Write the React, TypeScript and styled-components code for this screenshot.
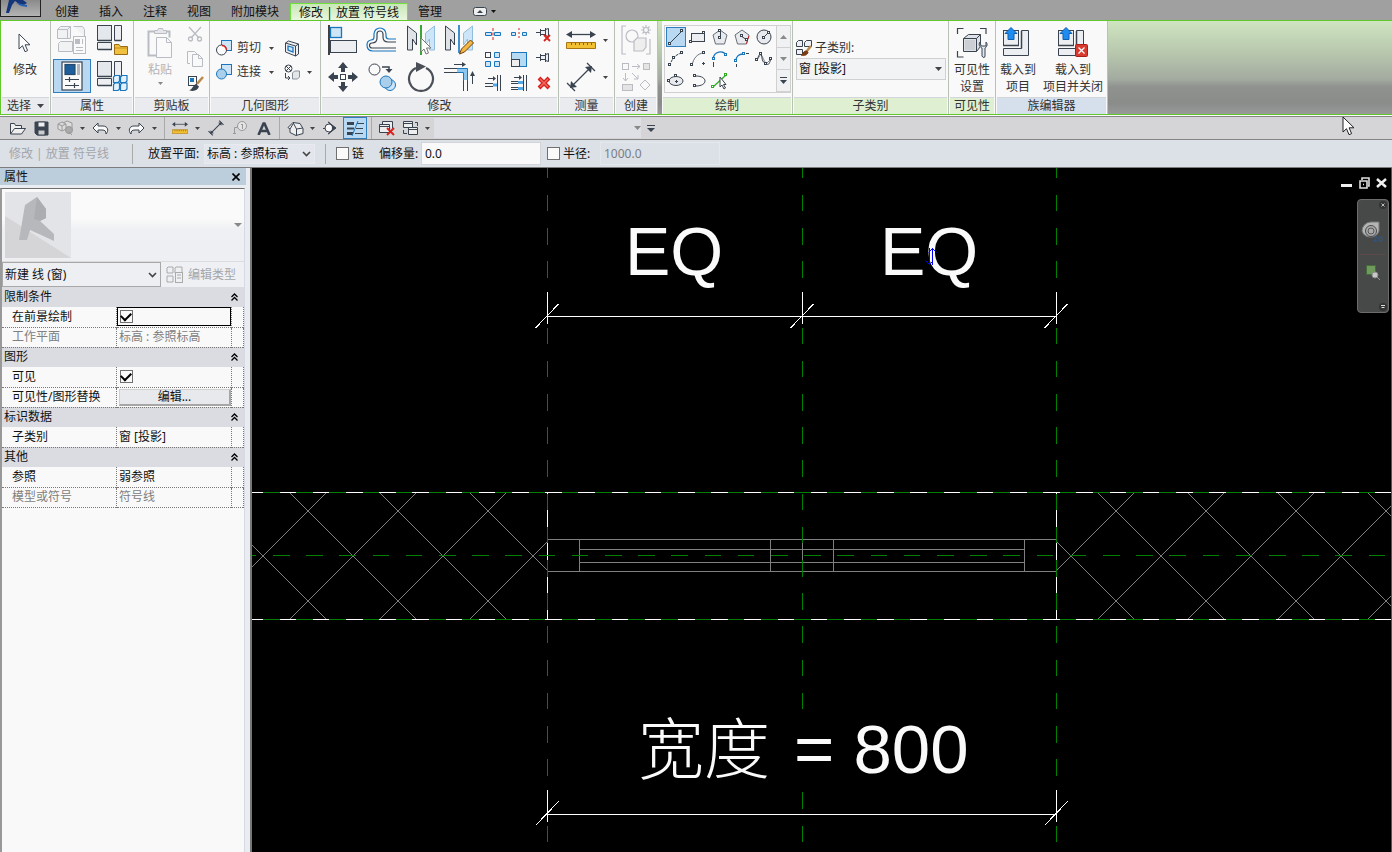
import React from 'react';
import styled, { createGlobalStyle, css } from 'styled-components';

const INK = '#3a4450';
const BLUE = '#1a76bd';
const SKY = '#cde5f6';
const MUTE = '#b9bdc3';
const RED = '#d8201c';

const GlobalStyle = createGlobalStyle`
  * { box-sizing: border-box; }
  body { margin: 0; background: #000; }
  body, button, input, select {
    font-family: "Noto Sans", "Noto Sans CJK SC", sans-serif;
    font-size: 12px;
    line-height: 16px;
    color: #333;
  }
  button, input, select { margin: 0; padding: 0; border: 0; border-radius: 0; background: none; }
  svg { display: block; flex: none; }
`;

/* ---------- shell ---------- */
const Shell = styled.div`
  position: relative;
  display: flex;
  flex-direction: column;
  min-height: 100vh;
  overflow: hidden;
`;
const TabBar = styled.nav`
  display: flex;
  align-items: stretch;
  height: 20px;
  background: #a0a0a0;
`;
const AppButton = styled.button`
  width: 41px;
  height: 17px;
  margin-right: 4px;
  overflow: hidden;
  border: 1px solid #222;
  border-top: 0;
  background: linear-gradient(#8a8a8a, #b4b4b4);
`;
const Tab = styled.button<{ $active?: boolean }>`
  padding: 0 10px;
  margin-top: 3px;
  height: 17px;
  white-space: nowrap;
  color: #111;
  ${p => p.$active && css`
    padding: 0 8px;
    margin-left: 1px;
    height: 18px;
    border: 1px solid #6fe03c;
    border-bottom: 0;
    background: linear-gradient(#c9e8b6, #eaf7e1);
  `}
`;
const TabToggle = styled.button`
  display: flex;
  align-items: center;
  gap: 4px;
  margin: 2px 0 0 21px;
`;

/* ---------- ribbon ---------- */
const Ribbon = styled.div`
  display: flex;
  height: 95px;
  border: 1px solid #62c92c;
  border-right: 0;
  background: linear-gradient(#cfe4c1 0, #b9c9ae 30px, #a3aba0 58px, #8f928f 66px, #8a8c8a 82px, #979a98 100%);
`;
const Panel = styled.section<{ $w: number; $gapAfter?: boolean }>`
  display: flex;
  flex-direction: column;
  width: ${p => p.$w}px;
  flex: none;
  margin-right: ${p => (p.$gapAfter ? 4 : 0)}px;
  border-right: 1px solid #b9c0b6;
  background: #f9f9f9;
`;
const PanelBody = styled.div<{ $pad?: string; $gap?: number }>`
  display: flex;
  flex: 1;
  padding: ${p => p.$pad || '0'};
  gap: ${p => p.$gap || 0}px;
`;
const titleTones = { plain: '#e9ebee', green: '#dff0d2', blue: '#d6e0ec' };
const PanelTitle = styled.h2<{ $tone: keyof typeof titleTones }>`
  display: flex;
  align-items: center;
  justify-content: center;
  gap: 6px;
  height: 17px;
  margin: 0 1px;
  border-top: 1px solid #d3d6da;
  background: ${p => titleTones[p.$tone]};
  font-size: 12px;
  font-weight: 400;
  line-height: 16px;
`;
const Column = styled.div`
  display: flex;
  flex-direction: column;
`;
const Row = styled.div`
  display: flex;
  align-items: center;
`;
const FieldLabel = styled.label`
  display: flex;
  align-items: center;
  gap: 3px;
  height: 21px;
`;
const IconButton = styled.button<{ $w: number; $h: number; $active?: boolean }>`
  display: flex;
  align-items: center;
  justify-content: center;
  flex: none;
  width: ${p => p.$w}px;
  height: ${p => p.$h}px;
  ${p => p.$active && css`
    border: 1px solid #2f7fc0;
    background: #b9d9f2;
  `}
`;
const StackButton = styled.button<{ $w: number; $muted?: boolean }>`
  display: flex;
  flex-direction: column;
  align-items: center;
  width: ${p => p.$w}px;
  padding-top: 4px;
  line-height: 17px;
  white-space: nowrap;
  color: ${p => (p.$muted ? '#b4b4b4' : '#333')};
`;
const IconSlot = styled.span`
  display: flex;
  align-items: center;
  justify-content: center;
  height: 36px;
`;
const CaretSlot = styled.span`
  display: flex;
  align-items: center;
  height: 10px;
`;
const TextButton = styled.button`
  display: flex;
  align-items: center;
  gap: 5px;
  width: 46px;
  height: 24px;
`;
const IconGrid = styled.div<{ $cols: string; $rows: string }>`
  display: grid;
  grid-template-columns: ${p => p.$cols};
  grid-template-rows: ${p => p.$rows};
  place-items: center;
`;
const Gallery = styled.div`
  display: flex;
  width: 127px;
  height: 68px;
  border: 1px solid #d0d0d0;
`;
const GalleryGrid = styled.div`
  display: grid;
  grid-template-columns: repeat(5, 22px);
  grid-template-rows: repeat(3, 22px);
  place-items: center;
  flex: 1;
`;
const GalleryScroll = styled.div`
  display: flex;
  flex-direction: column;
  width: 14px;
  border-left: 1px solid #d0d0d0;
`;
const GalleryStep = styled.button`
  display: flex;
  flex: 1;
  align-items: center;
  justify-content: center;
  border-bottom: 1px solid #d0d0d0;
  background: #f0f1f3;
`;

/* ---------- selects ---------- */
const SelectBox = styled.span<{ $w: number; $h: number; $border: string; $bg: string }>`
  display: grid;
  grid-template: 1fr / 1fr;
  align-items: center;
  flex: none;
  width: ${p => p.$w}px;
  height: ${p => p.$h}px;
  border: 1px solid ${p => p.$border};
  background: ${p => p.$bg};
  svg {
    grid-area: 1 / 1;
    justify-self: end;
    margin-right: 3px;
    pointer-events: none;
  }
`;
const SelectField = styled.select`
  grid-area: 1 / 1;
  width: 100%;
  height: 100%;
  padding: 0 16px 0 2px;
  appearance: none;
  color: #111;
`;

/* ---------- quick access bar ---------- */
const QuickBar = styled.div`
  display: flex;
  align-items: center;
  height: 25px;
  padding: 2px 0 1px 5px;
  border-top: 1px solid #fafafa;
  border-bottom: 1px solid #858585;
  background: linear-gradient(#858585 1px, #d5d4d6 1px);
`;
const BarRule = styled.i<{ $w: number; $h: number }>`
  width: ${p => p.$w}px;
  height: ${p => p.$h}px;
  flex: none;
  background: linear-gradient(#aaa, #aaa) center / 1px 100% no-repeat;
`;
const SearchField = styled.div`
  display: flex;
  align-items: center;
  justify-content: flex-end;
  width: 207px;
  height: 20px;
  margin-left: 4px;
  background: #dfe0e6;
`;

/* ---------- options bar ---------- */
const OptionsBar = styled.div`
  display: flex;
  align-items: center;
  height: 28px;
  padding-left: 9px;
  border-bottom: 1px solid #7d7d7d;
  background: #dce0e7;
  color: #111;
  white-space: nowrap;
`;
const ModeName = styled.span`
  width: 118px;
  color: #a3a6aa;
`;
const OptionLabel = styled.label<{ $w: number; $indent?: number }>`
  flex: none;
  width: ${p => p.$w}px;
  padding-left: ${p => p.$indent || 0}px;
`;
const OptionCheck = styled.label<{ $w: number; $indent?: number }>`
  display: flex;
  align-items: center;
  gap: 3px;
  flex: none;
  width: ${p => p.$w}px;
  padding-left: ${p => p.$indent || 0}px;
`;
const CheckBox = styled.input.attrs({ type: 'checkbox' })`
  display: grid;
  place-items: center;
  flex: none;
  width: 13px;
  height: 13px;
  appearance: none;
  border: 1px solid #707070;
  background: #fafafa;
  &:checked::before {
    content: '';
    width: 8px;
    height: 5px;
    margin-bottom: 2px;
    border: solid #000;
    border-width: 0 0 2px 2px;
    transform: rotate(-45deg);
  }
`;
const NumberBox = styled.input`
  width: 120px;
  height: 23px;
  padding: 0 3px;
  border: 1px solid #d2d4da;
  background: #f9f9f9;
  color: #111;
  &:disabled {
    border-color: #e4e7ec;
    background: #dce0e7;
    color: #7a7e84;
  }
`;

/* ---------- workspace ---------- */
const Workspace = styled.main`
  display: flex;
  flex: 1;
`;
const Properties = styled.aside`
  display: flex;
  flex-direction: column;
  flex: none;
  width: 252px;
  padding-right: 4px;
  border-right: 2px solid #777;
  background: #e9edf2;
`;
const PropertiesHead = styled.header`
  display: flex;
  align-items: center;
  justify-content: space-between;
  height: 17px;
  padding: 0 6px 0 4px;
  background: #bccddb;
  color: #111;
`;
const PropertiesBox = styled.div`
  flex: 1;
  margin: 3px 1px 0 0;
  border-top: 1px solid #6e6e6e;
  border-left: 2px solid #999;
  border-right: 1px solid #d5dae2;
  background: #f9f9f9;
`;
const TypePicker = styled.button`
  display: flex;
  align-items: center;
  justify-content: space-between;
  width: 100%;
  height: 73px;
  padding: 0 2px 0 3px;
  border-bottom: 1px solid #dcdcdc;
  background: linear-gradient(#fafafa 30px, #eff0f3 40px, #eeeff2);
`;
const TypeRow = styled.div`
  display: flex;
  align-items: center;
  gap: 5px;
  height: 25px;
  background: #eff0f3;
`;
const EditType = styled.button`
  display: flex;
  align-items: center;
  gap: 5px;
  color: #a4a6aa;
`;
const Grid = styled.table`
  width: 100%;
  table-layout: fixed;
  border-collapse: collapse;
  color: #111;
  th, td {
    height: 20px;
    padding: 0;
    text-align: left;
    font-weight: 400;
    line-height: 16px;
    white-space: nowrap;
  }
`;
const GroupCell = styled.th`
  background: #dadce1;
`;
const GroupButton = styled.button`
  display: flex;
  align-items: center;
  justify-content: space-between;
  width: 100%;
  height: 18px;
  padding: 0 6px 0 2px;
  color: #111;
`;
const PropRow = styled.tr<{ $muted?: boolean }>`
  border-bottom: 1px dotted #777;
  color: ${p => (p.$muted ? '#808080' : '#111')};
  & > th { padding-left: 10px; }
  & > td { border-left: 1px dotted #777; padding-left: 2px; }
  & > td:last-child { border-right: 1px dotted #777; }
`;
const ValueFrame = styled.span<{ $focus?: boolean }>`
  display: flex;
  align-items: center;
  height: 19px;
  padding-left: 2px;
  margin-left: -2px;
  border: 1px solid ${p => (p.$focus ? '#000' : 'transparent')};
`;
const EditButton = styled.button`
  display: block;
  width: 100%;
  height: 17px;
  border: 1px solid #d0d0d0;
  border-right: 2px solid #a6a6a6;
  border-bottom: 2px solid #a6a6a6;
  background: #e8e9ec;
  line-height: 14px;
  color: #111;
`;

const Viewport = styled.div`
  position: relative;
  flex: 1;
  min-width: 0;
  overflow: hidden;
  border-right: 1px solid #555;
  background: #000;
`;
const Drawing = styled.svg`
  position: absolute;
  inset: 0;
  width: 100%;
  height: 100%;
`;
const WindowControls = styled.div`
  position: absolute;
  top: 9px;
  right: 4px;
  display: flex;
  gap: 6px;
`;
const NavBar = styled.div`
  position: absolute;
  top: 31px;
  right: 2px;
  display: flex;
  flex-direction: column;
  align-items: center;
  justify-content: space-between;
  width: 32px;
  height: 114px;
  padding: 1px 0;
  border: 1px solid #6c6c6c;
  border-radius: 4px;
  background: #474949;
`;
const NavTools = styled.div`
  display: flex;
  flex-direction: column;
  align-items: center;
  gap: 8px;
  margin-bottom: 10px;
`;
const NavMini = styled.button`
  align-self: flex-end;
  margin-right: 1px;
`;
const Pointer = styled.svg`
  position: absolute;
  top: 116px;
  right: 36px;
  pointer-events: none;
`;

/* ---------- icons ---------- */
type IconProps = { w: number; h: number; s?: string; sw?: number; children: React.ReactNode };
const Icon = ({ w, h, s = INK, sw = 1, children }: IconProps) => (
  <svg width={w} height={h} viewBox={`0 0 ${w} ${h}`} fill="none" stroke={s} strokeWidth={sw} aria-hidden="true">
    {children}
  </svg>
);
const Caret = ({ c = '#444', w = 5 }: { c?: string; w?: number }) => (
  <svg width={w} height={w > 6 ? 4 : 3} viewBox="0 0 6 3" preserveAspectRatio="none" aria-hidden="true"><path d="M0 0h6L3 3z" fill={c} /></svg>
);
const UpCaret = () => <svg width="7" height="4" viewBox="0 0 7 4" aria-hidden="true"><path d="M0 4h7L3.500 0z" fill="#8a8a8a" /></svg>;
const ARROW = 'M1 1v15l3.500-3.300 2.500 6 2.600-1.100-2.500-5.800H12z';

const Chevron = () => <Icon w={9} h={6} s="#444" sw={1.6}><path d="M1 1l3.500 3.500L8 1" /></Icon>;
const CursorIcon = () => <Icon w={14} h={21}><path d={ARROW} fill="#fff" /></Icon>;

const TypeProps = ({ s = MUTE }) => (
  <Icon w={30} h={30} s={s}>
    <path d="M3.500 1.500h10v12h-13v-9zM3.500 16.500h12v10h-14v-8zM16.500 1.500h9l2 3v7M.5 4.500h10v9M10.500 4.500l3-3" fill="#f1f2f4" />
    <rect x="16.500" y="11.500" width="12" height="17" fill="#fafafa" />
    <rect x="18.500" y="14.500" width="4" height="4" fill={s} />
    <path d="M19 22.500h7M19 25.500h7M25.500 14v5" />
  </Icon>
);
const Blocks = ({ children }: { children: React.ReactNode }) => (
  <Icon w={31} h={31} sw={1}>
    <rect x=".5" y=".5" width="14" height="15" fill="#e4e7ec" />
    <path d="M17.500 15.500V.5h7v15M.5 17.500h14v7H.5z" fill="#eceef1" />
    <path d="M1 15.500h14M1 24.500h14M17.500 15.500h7" strokeWidth="1.500" />
    {children}
  </Icon>
);
const FamilyCategory = () => (
  <Blocks><path d="M17.500 29.500V19.500h4.500l1.500 2h7v8z" fill="#f0c040" stroke="#9a6a14" /><path d="M18 23h12" stroke="#c89018" /></Blocks>
);
const FamilyTypes = () => (
  <Blocks>
    <g fill="#e2f1fb" stroke={BLUE} strokeWidth="1.200">
      <path d="M16.500 16l1.500-1.500h4.500v5.500l-1.500 1.500h-4.500zM23.500 16l1.500-1.500h5v5.500l-1.500 1.500h-5zM16.500 23.500l1.500-1.500h4.500v6l-1.500 1.500h-4.500zM23.500 23.500l1.500-1.500h5v6l-1.500 1.500h-5z" />
    </g>
  </Blocks>
);
const PropertiesIcon = () => (
  <Icon w={22} h={30} sw={1.2}>
    <rect x="1" y="1" width="20" height="28" fill="#fafafa" />
    <rect x="4" y="3.500" width="10" height="10" fill="#1d5f9c" stroke="#274a6b" />
    <path d="M17.500 3v11" stroke="#b0b6be" strokeWidth="3" />
    <path d="M4 18.500h14M8.500 16v5M4 24.500h14M13.500 22v5" />
  </Icon>
);
const Paste = () => (
  <Icon w={26} h={32} s={MUTE}>
    <path d="M7 4.500H1.500v24H9M19 4.500h3.500v6" strokeWidth="2" />
    <path d="M7.500 6.500v-3h3l1-2h4l1 2h3v3z" fill="#e4e6e9" />
    <path d="M9.500 10.500h10l5 5v15h-15zM19.500 10.500v5h5" fill="#fafafa" />
  </Icon>
);
const Scissors = () => (
  <Icon w={16} h={16} s={MUTE} sw={1.3}><path d="M2 1l10 11M14 1L4 12" /><circle cx="3.500" cy="13" r="2" /><circle cx="12.500" cy="13" r="2" /></Icon>
);
const Copy = () => (
  <Icon w={16} h={16} s={MUTE}><path d="M3 12.500H.5V.5h7l3 3" /><path d="M5.500 3.500h6l4 4v8h-10zM11.500 3.500v4h4" /></Icon>
);
const MatchType = () => (
  <Icon w={17} h={17}><rect x="1.500" y="1.500" width="8" height="9" fill="#fafafa" /><rect x="3.500" y="3.500" width="3" height="3" fill={BLUE} stroke={BLUE} />
    <path d="M16 2l-6 7" stroke="#b98a4c" strokeWidth="2.500" /><path d="M2 15c3 .5 4-5 7-6l3 2.500c-1 4-6 5.500-10 3.500z" fill={INK} stroke="none" /></Icon>
);
const Cut = () => (
  <Icon w={16} h={16} s={BLUE}><rect x="5.500" y=".5" width="10" height="10" fill={SKY} /><circle cx="5.500" cy="10" r="5" fill="#fafafa" stroke={INK} /><path d="M6 5.500a5 5 0 0 1 4.500 4.500" stroke={RED} strokeWidth="1.300" /></Icon>
);
const Join = () => (
  <Icon w={16} h={16} s={BLUE}><rect x="5.500" y=".5" width="10" height="10" fill={SKY} /><circle cx="5.500" cy="10" r="5" fill="#a9cfea" /></Icon>
);
const Opening = () => (
  <Icon w={16} h={17}><path d="M1.500 3l3-2 10 3v10l-3 2-10-4zM11.500 16V6l3-2M11.500 6l-10-3" fill="#eef0f3" /><path d="M4 6l5 1.500v4.500L4 10z" fill={SKY} stroke={BLUE} strokeWidth="1.300" /></Icon>
);
const Demolish = () => (
  <Icon w={17} h={17}><circle cx="4.500" cy="4.500" r="3.500" /><path d="M2 2l5 5M7 2L2 7M1.500 9v5h4M4 12l2 2-2 2" /><path d="M8.500 9l2-2h5v6l-2 2h-5z" fill="#e4e7ea" stroke="#8a9098" /></Icon>
);
const Align = () => (
  <Icon w={30} h={32}><path d="M1 1v30" strokeWidth="1.500" stroke="#000" /><rect x="2.500" y="3.500" width="11" height="10" fill={SKY} stroke={BLUE} strokeWidth="1.300" /><rect x="2.500" y="16.500" width="26" height="12" fill="#eceef1" /></Icon>
);
const Offset = () => (
  <Icon w={31} h={26} sw={1.2}>
    <path d="M30 12h-7c-2 0-3-1-3-3V7a6 6 0 0 0-12 0v3c0 2-1 3-3 3a5 5 0 0 0-4 5c0 4 2 6 6 6h23" stroke={BLUE} />
    <path d="M30 15h-8c-4 0-5-2-5-5V7a3 3 0 0 0-6 0v4c0 3-2 5-5 5a2.500 2.500 0 0 0 0 5h24" />
  </Icon>
);
const mirrorShape = 'M.5 1l9 7v12l-4-6v11h-5z';
const mirrorTwin = 'M27.500 1l-9 7v12l4-6v11h5z';
const MirrorPick = () => (
  <Icon w={28} h={31}><path d={mirrorShape} fill="#dfe2e6" /><path d={mirrorTwin} fill={SKY} stroke="#8fbede" /><path d="M14 0v30" stroke="#39a635" strokeWidth="2" /><path d="M14 13v14l3-3 2 5 2.500-1-2-5H24z" fill="#fff" stroke="#777" /></Icon>
);
const MirrorDraw = () => (
  <Icon w={30} h={31}><path d={mirrorShape} fill="#dfe2e6" /><path d={mirrorTwin} fill={SKY} stroke="#8fbede" /><path d="M14 0v28" stroke="#3f8fd0" strokeWidth="2" /><path d="M14.500 29l2-5 9-9 3 3-9 9z" fill="#f3b744" stroke="#70400a" /></Icon>
);
const Move = () => (
  <Icon w={30} h={30}><g fill={INK} stroke="none"><path d="M15 0l5 6h-3v4h-4V6h-3zM15 30l5-6h-3v-4h-4v4h-3zM0 15l6-5v3h4v4H6v3zM30 15l-6-5v3h-4v4h4v3z" /></g><rect x="12.500" y="12.500" width="5" height="5" fill="#fff" /></Icon>
);
const CopyMove = () => (
  <Icon w={28} h={29}><circle cx="6.500" cy="6.500" r="5.500" fill="#fafafa" /><path d="M14 4h7v3" strokeWidth="1.500" /><path d="M17.500 6h7L21 10z" fill={INK} stroke="none" /><circle cx="22" cy="22" r="5.500" fill={SKY} stroke={BLUE} /><circle cx="18" cy="19" r="6" fill="#a9cfea" stroke={BLUE} /></Icon>
);
const Rotate = () => (
  <Icon w={28} h={30} s="#4a4f58"><path d="M9 6A12 12 0 1 0 19 6" strokeWidth="2.200" /><path d="M9 0l10 4.500L9 10z" fill="#4a4f58" stroke="none" /></Icon>
);
const Trim = () => (
  <Icon w={31} h={30}><path d="M0 6.500h13M0 10.500h13M19.500 18v11M23.500 18v11M10 2.500h9" /><path d="M13 8.500h8.500V18" stroke="#8cc7f0" strokeWidth="3" /><path d="M13 6.500h10.500v12M13 10.500h6.500v8" stroke={BLUE} /><path d="M18 0l4 2.500-4 2.500zM26 14l2.500-5 2.500 5z" fill={INK} stroke="none" /><path d="M28.500 13v9" /></Icon>
);
const SplitA = () => (
  <Icon w={16} h={12} s={BLUE}><path d="M.5 4.500h6v3h-6zM9.500 4.500h6v3h-6z" fill={SKY} /><path d="M8 0v12" stroke={RED} strokeDasharray="3 1.500" /></Icon>
);
const SplitB = () => (
  <Icon w={16} h={12} s={BLUE}><path d="M.5 4.500h4v3h-4zM11.500 4.500h4v3h-4z" fill={SKY} /><path d="M8 0v12" stroke={RED} strokeDasharray="2 2" /></Icon>
);
const Pin = ({ x = false }) => (
  <Icon w={17} h={16}><path d="M1 6.500h4M5.500 3v7M5.500 4.500h5v4h-5M10.500 2v9M10.500 3.500l3-1v8l-3-1" fill="#eef0f3" />{x && <path d="M9 9l6 6M15 9l-6 6" stroke={RED} strokeWidth="1.800" />}</Icon>
);
const ArrayIcon = () => (
  <Icon w={17} h={17} s={BLUE}><rect x="1.500" y="1.500" width="5" height="5" stroke={INK} /><path d="M10.500 1.500h5v5h-5zM1.500 10.500h5v5h-5zM10.500 10.500h5v5h-5z" fill={SKY} /></Icon>
);
const Scale = () => (
  <Icon w={16} h={17}><rect x=".5" y="1.500" width="15" height="14" fill="#b5daf4" stroke={BLUE} /><rect x=".5" y="8.500" width="8" height="7" fill="#eee" /></Icon>
);
const ExtendOne = () => (
  <Icon w={16} h={16}><path d="M3 3.500h6M0 8.500h8M0 11.500h8M12.500 0v16M15.500 0v16" /><path d="M8 1l3 2.500L8 6z" fill={INK} stroke="none" /><path d="M8 10h4" stroke="#53a8e6" strokeWidth="3" /></Icon>
);
const ExtendMany = () => (
  <Icon w={16} h={16}><path d="M3 2.500h6M0 6.500h7M0 8.500h7M0 12.500h7M0 14.500h7M12.500 0v16M15.500 0v16" /><path d="M8 0l3 2.500L8 5z" fill={INK} stroke="none" /><path d="M7 7.500h5M7 13.500h5" stroke="#53a8e6" strokeWidth="3" /></Icon>
);
const Delete = () => (
  <Icon w={14} h={14} s={RED} sw={4}><path d="M2 2l10 10M12 2L2 12" /><path d="M3 3l8 8M11 3l-8 8" stroke="#f06a60" strokeWidth="1.500" /></Icon>
);
const Ruler = ({ w = 30, h = 18 }) => (
  <svg width={w} height={h} viewBox="0 0 30 18" preserveAspectRatio="none" fill="none" stroke={INK} strokeWidth="1.300" aria-hidden="true">
    <path d="M3 3.500h24" /><path d="M0 3.500l6-3.500v7zM30 3.500l-6-3.500v7z" fill={INK} stroke="none" />
    <path d="M.5 11.500h29v6H.5z" fill="#f2c033" stroke="#a87410" strokeWidth="1" /><path d="M5.500 12v2M9.500 12v2M13.500 12v2M17.500 12v2M21.500 12v2M25.500 12v2" stroke="#8a5f0e" strokeWidth="1" />
  </svg>
);
const Dimension = ({ w = 30, sw = 1.2 }) => (
  <svg width={w} height={w} viewBox="0 0 30 30" fill="none" stroke={INK} strokeWidth={sw} aria-hidden="true">
    <path d="M5 25L25 5M1 21l8 8M21 1l8 8" /><path d="M4 26l1-7 6 6zM26 4l-7 1 6 6z" fill={INK} stroke="none" />
  </svg>
);
const CreateGroup = () => (
  <Icon w={30} h={30} s={MUTE} sw={1.2}><path d="M5 1H1v28h4M25 29h4V14" /><circle cx="11" cy="11" r="6" /><path d="M13 16l3-3h9v9l-3 4h-9z" fill="#eee" /><circle cx="25" cy="5" r="2.500" /><path d="M25 0v2M25 8v2M20 5h2M28 5h2M21.500 1.500l1.500 1.500M27 7l1.500 1.500M28.500 1.500L27 3M23 7l-1.500 1.500" /></Icon>
);
const CreateSimilar = () => (
  <Icon w={30} h={30} s={MUTE}><rect x="1.500" y="1.500" width="6" height="6" /><rect x="22.500" y="1.500" width="6" height="6" fill="#e4e4e4" /><rect x="1.500" y="22.500" width="10" height="6" fill="#e4e4e4" /><path d="M24 18l5 5-5 5-5-5zM11 4.500h8M16 2l3 2.500L16 7M4.500 11v8M2 16l2.500 3L7 16M11 11l6 6M17 13v4h-4" /></Icon>
);

const N = ({ x, y, c = INK }: { x: number; y: number; c?: string }) => <rect x={x - 0.5} y={y - 0.5} width="2" height="2" fill="#fff" stroke={c} />;
const drawTools: [string, React.ReactNode][] = [
  ['线', <><path d="M3 15L15 3" /><N x={2} y={15} /><N x={14} y={2} /></>],
  ['矩形', <><rect x="2.500" y="5.500" width="13" height="8" fill="#eceef1" /><N x={1} y={13} /><N x={14} y={4} /></>],
  ['内接多边形', <><path d="M9 2l7 5-2.500 9h-9L2 7z" fill="#e8eaee" stroke="#666e78" /><path d="M9.500 3v6" /><N x={8} y={9} /><N x={8} y={2} /></>],
  ['外接多边形', <><path d="M9 2l7 5-2.500 9h-9L2 7z" fill="#e8eaee" stroke="#666e78" /><path d="M8 8l6 4" /><path d="M16 8l-3 9" stroke={RED} strokeDasharray="3 2" /><N x={8} y={7} /><N x={13} y={11} /></>],
  ['圆形', <><circle cx="9" cy="9" r="7" fill="#e8eaee" /><path d="M9 9l5-5" /><N x={8} y={9} /><N x={13} y={4} /></>],
  ['起点终点弧', <><path d="M3 16C4 9 9 4 15 3" strokeDasharray="3 1" /><N x={2} y={14} /><N x={6} y={7} /><N x={14} y={2} /></>],
  ['圆心弧', <><path d="M3 16C4 8 9 3 15 3" stroke="#6a727c" /><N x={2} y={14} /><N x={14} y={2} /><path d="M14.500 12v3M13 13.500h3" /></>],
  ['相切弧', <><path d="M2 9C3 1 12 0 15 5" stroke={BLUE} strokeWidth="1.300" /><path d="M2.500 12v5" /><N x={2} y={8} c={BLUE} /><N x={14} y={4} c={BLUE} /></>],
  ['圆角弧', <><path d="M3 11c0-5 3-7 7-7" stroke={BLUE} strokeWidth="1.300" /><path d="M3.500 14v3M13 3.500h3" /><N x={2} y={10} c={BLUE} /><N x={10} y={3} c={BLUE} /></>],
  ['样条曲线', <><path d="M2 10l4-6 5 10 5-5" stroke="#858c95" /><path d="M2 10C5 2 6 2 7 8s3 4 5 6 3-3 4-5" /><N x={1} y={9} /><N x={5} y={3} /><N x={10} y={13} /><N x={15} y={8} /></>],
  ['椭圆', <><ellipse cx="9" cy="9" rx="7" ry="4.500" fill="#e8eaee" /><N x={1} y={8} /><path d="M9.500 8v3M8 9.500h3" /><N x={8} y={3} /></>],
  ['半椭圆', <><path d="M7 4c12 0 12 10 0 10" /><N x={5} y={3} /><N x={5} y={13} /></>],
  ['拾取线', <><path d="M2 15L15 3" stroke="#2fae22" strokeWidth="1.300" /><N x={1} y={14} c="#2fae22" /><N x={14} y={2} c="#2fae22" /><path d="M9 5v10l2-2 2 4 1.500-1-2-3.500H15z" fill="#fff" /></>],
];
const Subcategory = () => (
  <Icon w={16} h={16}><path d="M.5 2.500l2-2h4v6h-6zM8.500 2.500l2-2h5v6h-7zM.5 9.500h6v5h-6z" fill="#eef0f3" /><path d="M15 6l-5 6" stroke="#b98a4c" strokeWidth="2.500" /><path d="M5 15c2 0 2-4 5-4l2 1c0 3-4 4-7 3z" fill="#7a3a14" stroke="#7a3a14" /></Icon>
);
const Visibility = () => (
  <Icon w={32} h={32}><path d="M1.500 7V1.500h6M24 1.500h6V7M1.500 24v6h6" strokeWidth="1.200" /><path d="M7.500 11.500l5-4h12v12l-4 5h-13z" fill="#dde0e4" /><path d="M7.500 11.500h13v13M20.500 11.500l4-4" /><path d="M9 13h10v10H9z" fill="#ccd0d5" stroke="none" /><path d="M24 15c-2 3 0 5 2 6v8c1 2 3 2 3 0v-8c2-1 3-4 1-6v4h-5z" fill="#dfe8f0" /></Icon>
);
const LoadProject = ({ close = false }) => (
  <Icon w={32} h={32}>
    <rect x="1.500" y="3.500" width="15" height="15" fill="#eceef1" />
    <path d="M19.500 3.500h7v25h-25v-7h18z" fill="#eceef1" />
    <path d="M1 18.500h16M19.500 4v17.500" strokeWidth="1.500" />
    <path d="M9 .5l6 6h-3v6H6v-6H3z" fill="#1f8cf0" stroke="#0f5fae" />
    {close && <><rect x="18.500" y="17.500" width="12" height="12" rx="1" fill="#d93a30" stroke="#a8201a" /><path d="M21.500 20.500l6 6M27.500 20.500l-6 6" stroke="#fff" strokeWidth="1.300" /></>}
  </Icon>
);

/* quick access icons */
const Open = () => <Icon w={17} h={13}><path d="M1.500 12V1.500h4l1 2h6v3M1.500 12l4-5.500h11l-4 5.500z" fill="#eee" /></Icon>;
const Save = () => <Icon w={15} h={15}><path d="M1 1h13v13H3l-2-2z" fill={INK} /><rect x="4" y="1" width="7" height="5" fill="#eee" /><rect x="4" y="9" width="7" height="5" fill="#ccc" /></Icon>;
const Sync = () => <Icon w={17} h={16} s="#999"><path d="M1 4l4-2 4 2v5L5 11 1 9zM6 3l4-2 5 2v6M1 4l4 2 4-2M5 6v5" fill="#ddd" /><circle cx="12" cy="10" r="3.500" fill="#aaa" /><path d="M12 12l3 3" /></Icon>;
const Undo = () => <Icon w={17} h={13}><path d="M1 6l5-5v3h5c5 0 6 5 3 8 0-3-1-4-4-4H6v3z" fill="#fafafa" /></Icon>;
const Redo = () => <Icon w={17} h={13}><path d="M16 6l-5-5v3H6C1 4 0 9 3 12c0-3 1-4 4-4h4v3z" fill="#fafafa" /></Icon>;
const Tag = () => <Icon w={16} h={14} s="#999"><circle cx="10" cy="5" r="4.500" fill="#e4e4e4" /><path d="M10.500 3v5M9 3.500h1M2.500 12V6.500h3M1 12.500h3" /></Icon>;
const TextTool = () => <Icon w={14} h={13} sw={2.6}><path d="M1.500 13L6.500 1.500h1L12.500 13M4 9h6" /></Icon>;
const Home = () => <Icon w={17} h={15}><path d="M1 6.500l5-5 7 1 3 5v5l-7 2-6-3V8z" fill="#eee" /><path d="M9.500 14V8L6 1.500M9.500 8l6.500-1M3 8l3-5" /></Icon>;
const Section = () => <Icon w={14} h={14}><circle cx="6" cy="7" r="4" fill="#fafafa" /><path d="M5 1l8 6-8 6c6-3 6-9 0-12z" fill={INK} /><path d="M0 7.500h2" /></Icon>;
const ThinLines = () => <Icon w={17} h={15}><path d="M0 2.500h7M0 12.500h6" strokeWidth="3" /><path d="M0 7.500h7" strokeWidth="2" /><path d="M10 2.500h7M9 7.500h7M8 12.500h8" /><path d="M11 0L5 15" stroke={BLUE} /></Icon>;
const CloseHidden = () => <Icon w={17} h={16}><path d="M4.500 4V1.500h10v7M1.500 12.500v-8h10v8z" fill="#eee" /><path d="M1.500 6.500h10" /><path d="M9 8l7 7M16 8l-7 7" stroke={RED} strokeWidth="1.800" /></Icon>;
const SwitchWindows = () => <Icon w={17} h={16}><path d="M1.500 1.500h9v6h-9zM6.500 7.500h9v7h-9z" fill="#eee" /><path d="M6 9.500h10M1 3.500h10M13 2.500h2.500V6M1.500 10v3.500H5" /></Icon>;

const Logo = () => (
  <svg width="40" height="17" aria-hidden="true"><path d="M8 0h14l4 3-5 3-7-5-3 4-3 8H5z" fill="#14357a" /><path d="M15 3l11 2v2l-6-1z" fill="#2b5fb0" /></svg>
);
const Thumb = () => (
  <svg width="66" height="66" aria-hidden="true">
    <rect width="66" height="66" fill="#e3e4e7" /><path d="M0 24l66 42H0z" fill="#d5d5d8" />
    <path d="M20 13l12-8 9 12v9l-6 3 14 13v7l-15-7-9-4-3 10h-8z" fill="#b7b8bb" />
    <path d="M32 5l9 12v9l-6 3-6-2z" fill="#acadb1" />
  </svg>
);
const Collapse = () => <Icon w={7} h={8} s="#000" sw={1.3}><path d="M.5 4l3-3 3 3M.5 7.500l3-3 3 3" /></Icon>;
const CloseX = () => <Icon w={8} h={8} s="#000" sw={1.6}><path d="M.5.5l7 7M7.500.5l-7 7" /></Icon>;

/* ---------- ribbon panels ---------- */
type RibbonPanelProps = { title: string; w: number; tone?: keyof typeof titleTones; pad?: string; gap?: number; gapAfter?: boolean; menu?: boolean; children: React.ReactNode };
const RibbonPanel = ({ title, w, tone = 'plain', pad, gap, gapAfter, menu, children }: RibbonPanelProps) => (
  <Panel $w={w} $gapAfter={gapAfter}>
    <PanelBody $pad={pad} $gap={gap}>{children}</PanelBody>
    <PanelTitle $tone={tone}>{title}{menu && <Caret w={7} />}</PanelTitle>
  </Panel>
);

const B = ({ label, w = 24, h = 24, active, children }: { label: string; w?: number; h?: number; active?: boolean; children: React.ReactNode }) => (
  <IconButton type="button" aria-label={label} $w={w} $h={h} $active={active}>{children}</IconButton>
);

const RibbonArea = () => (
  <Ribbon>
    <RibbonPanel title="选择" w={50} menu>
      <StackButton type="button" $w={48}><IconSlot><CursorIcon /></IconSlot>修改</StackButton>
    </RibbonPanel>
    <RibbonPanel title="属性" w={83} pad="2px 2px">
      <IconGrid $cols="38px 42px" $rows="34px 38px">
        <B label="类型属性" w={34} h={34}><TypeProps /></B>
        <B label="族类别和族参数" w={34} h={34}><FamilyCategory /></B>
        <B label="属性" w={38} h={34} active><PropertiesIcon /></B>
        <B label="族类型" w={34} h={34}><FamilyTypes /></B>
      </IconGrid>
    </RibbonPanel>
    <RibbonPanel title="剪贴板" w={76} pad="0 2px">
      <StackButton type="button" $w={48} $muted><IconSlot><Paste /></IconSlot>粘贴<CaretSlot><Caret c="#888" /></CaretSlot></StackButton>
      <IconGrid $cols="22px" $rows="26px 24px 24px">
        <B label="剪切"><Scissors /></B>
        <B label="复制"><Copy /></B>
        <B label="匹配类型"><MatchType /></B>
      </IconGrid>
    </RibbonPanel>
    <RibbonPanel title="几何图形" w={111} pad="15px 0 0 6px">
      <Column>
        <Row>
          <TextButton type="button"><Cut />剪切</TextButton><B label="剪切选项" w={18}><Caret /></B>
          <B label="洞口" w={24}><Opening /></B>
        </Row>
        <Row>
          <TextButton type="button"><Join />连接</TextButton><B label="连接选项" w={18}><Caret /></B>
          <B label="拆除" w={24}><Demolish /></B><B label="拆除选项" w={10}><Caret /></B>
        </Row>
      </Column>
    </RibbonPanel>
    <RibbonPanel title="修改" w={238} pad="0 0 0 2px">
      <IconGrid $cols="39px 39px 39px 39px" $rows="38px 36px">
        <B label="对齐" w={34} h={34}><Align /></B>
        <B label="偏移" w={34} h={34}><Offset /></B>
        <B label="镜像 - 拾取轴" w={34} h={34}><MirrorPick /></B>
        <B label="镜像 - 绘制轴" w={34} h={34}><MirrorDraw /></B>
        <B label="移动" w={34} h={34}><Move /></B>
        <B label="复制" w={34} h={34}><CopyMove /></B>
        <B label="旋转" w={34} h={34}><Rotate /></B>
        <B label="修剪/延伸为角" w={34} h={34}><Trim /></B>
      </IconGrid>
      <IconGrid $cols="27px 25px 25px" $rows="26px 24px 24px">
        <B label="拆分图元"><SplitA /></B>
        <B label="用间隙拆分"><SplitB /></B>
        <B label="解锁"><Pin x /></B>
        <B label="阵列"><ArrayIcon /></B>
        <B label="缩放"><Scale /></B>
        <B label="锁定"><Pin /></B>
        <B label="修剪/延伸单个图元"><ExtendOne /></B>
        <B label="修剪/延伸多个图元"><ExtendMany /></B>
        <B label="删除"><Delete /></B>
      </IconGrid>
    </RibbonPanel>
    <RibbonPanel title="测量" w={56} pad="0 0 0 5px">
      <IconGrid $cols="34px 14px" $rows="38px 36px">
        <B label="测量" w={34} h={34}><Ruler /></B><B label="测量选项" w={12}><Caret /></B>
        <B label="对齐尺寸标注" w={34} h={34}><Dimension /></B><B label="标注选项" w={12}><Caret /></B>
      </IconGrid>
    </RibbonPanel>
    <RibbonPanel title="创建" w={43} gapAfter pad="0 0 0 4px">
      <IconGrid $cols="34px" $rows="38px 36px">
        <B label="创建组" w={34} h={34}><CreateGroup /></B>
        <B label="创建类似" w={34} h={34}><CreateSimilar /></B>
      </IconGrid>
    </RibbonPanel>
    <RibbonPanel title="绘制" w={131} tone="green" pad="4px 0 0 2px">
      <Gallery>
        <GalleryGrid>
          {drawTools.map(([label, art], i) => (
            <B key={label} label={label} w={20} h={20} active={i === 0}><Icon w={18} h={18}>{art}</Icon></B>
          ))}
        </GalleryGrid>
        <GalleryScroll>
          <GalleryStep type="button" aria-label="上一行"><UpCaret /></GalleryStep>
          <GalleryStep type="button" aria-label="下一行"><Caret c="#8a8a8a" w={7} /></GalleryStep>
          <GalleryStep type="button" aria-label="展开"><Icon w={7} h={7}><path d="M0 .5h7" /><path d="M0 3h7L3.500 7z" fill={INK} stroke="none" /></Icon></GalleryStep>
        </GalleryScroll>
      </Gallery>
    </RibbonPanel>
    <RibbonPanel title="子类别" w={156} tone="green" pad="16px 0 0 3px">
      <Column>
        <FieldLabel htmlFor="subcategory"><Subcategory />子类别:</FieldLabel>
        <SelectBox $w={150} $h={22} $border="#d0d0d0" $bg="#f2f3f5">
          <SelectField id="subcategory"><option>窗 [投影]</option></SelectField>
          <Caret w={7} />
        </SelectBox>
      </Column>
    </RibbonPanel>
    <RibbonPanel title="可见性" w={47} tone="green">
      <StackButton type="button" $w={46}><IconSlot><Visibility /></IconSlot>可见性<span>设置</span></StackButton>
    </RibbonPanel>
    <RibbonPanel title="族编辑器" w={112} tone="blue">
      <StackButton type="button" $w={44}><IconSlot><LoadProject /></IconSlot>载入到<span>项目</span></StackButton>
      <StackButton type="button" $w={66}><IconSlot><LoadProject close /></IconSlot>载入到<span>项目并关闭</span></StackButton>
    </RibbonPanel>
  </Ribbon>
);

const QuickAccess = () => (
  <QuickBar>
    <B label="打开" h={21}><Open /></B>
    <B label="保存" h={21}><Save /></B>
    <B label="同步" h={21}><Sync /></B>
    <B label="同步选项" w={10} h={21}><Caret /></B>
    <B label="放弃" w={26} h={21}><Undo /></B>
    <B label="放弃列表" w={10} h={21}><Caret /></B>
    <B label="重做" w={26} h={21}><Redo /></B>
    <B label="重做列表" w={10} h={21}><Caret /></B>
    <BarRule $w={11} $h={22} />
    <B label="测量" w={20} h={21}><Ruler w={16} h={12} /></B>
    <B label="测量选项" w={14} h={21}><Caret /></B>
    <B label="尺寸标注" h={21}><Dimension w={16} sw={2} /></B>
    <B label="标记" h={21}><Tag /></B>
    <B label="文字" h={21}><TextTool /></B>
    <BarRule $w={7} $h={22} />
    <B label="三维视图" h={21}><Home /></B>
    <B label="三维视图选项" w={10} h={21}><Caret /></B>
    <B label="剖面" w={26} h={21}><Section /></B>
    <B label="细线" h={22} active><ThinLines /></B>
    <BarRule $w={9} $h={22} />
    <B label="关闭隐藏窗口" w={20} h={21}><CloseHidden /></B>
    <B label="切换窗口" w={28} h={21}><SwitchWindows /></B>
    <B label="窗口列表" w={6} h={21}><Caret /></B>
    <SearchField><Caret c="#888" w={7} /></SearchField>
    <B label="自定义" w={19} h={21}><Icon w={8} h={7}><path d="M0 .5h8" /><path d="M0 3h8L4 7z" fill={INK} stroke="none" /></Icon></B>
  </QuickBar>
);

const Options = () => (
  <OptionsBar>
    <ModeName>修改 | 放置 符号线</ModeName>
    <BarRule $w={11} $h={20} />
    <OptionLabel htmlFor="plane" $w={66} $indent={10}>放置平面:</OptionLabel>
    <SelectBox $w={111} $h={20} $border="#e8eaef" $bg="#e3e6ec">
      <SelectField id="plane"><option>标高 : 参照标高</option></SelectField>
      <Chevron />
    </SelectBox>
    <BarRule $w={21} $h={20} />
    <OptionCheck $w={43}><CheckBox />链</OptionCheck>
    <OptionLabel htmlFor="offset" $w={42}>偏移量:</OptionLabel>
    <NumberBox id="offset" defaultValue="0.0" />
    <OptionCheck $w={59} $indent={6}><CheckBox />半径:</OptionCheck>
    <NumberBox aria-label="半径" defaultValue="1000.0" disabled />
  </OptionsBar>
);

/* ---------- properties ---------- */
type Prop = { name: string; value: React.ReactNode; muted?: boolean };
const groups: { title: string; rows: Prop[] }[] = [
  {
    title: '限制条件',
    rows: [
      { name: '在前景绘制', value: <ValueFrame $focus><CheckBox defaultChecked aria-label="在前景绘制" /></ValueFrame> },
      { name: '工作平面', value: '标高 : 参照标高', muted: true },
    ],
  },
  {
    title: '图形',
    rows: [
      { name: '可见', value: <ValueFrame><CheckBox defaultChecked aria-label="可见" /></ValueFrame> },
      { name: '可见性/图形替换', value: <EditButton type="button">编辑...</EditButton> },
    ],
  },
  { title: '标识数据', rows: [{ name: '子类别', value: '窗 [投影]' }] },
  { title: '其他', rows: [{ name: '参照', value: '弱参照' }, { name: '模型或符号', value: '符号线', muted: true }] },
];

const PropertiesPanel = () => (
  <Properties>
    <PropertiesHead>属性<button type="button" aria-label="关闭"><CloseX /></button></PropertiesHead>
    <PropertiesBox>
      <TypePicker type="button" aria-label="类型选择器"><Thumb /><Caret c="#888" w={8} /></TypePicker>
      <TypeRow>
        <SelectBox $w={159} $h={25} $border="#a8a8a8" $bg="#eeeff2">
          <SelectField aria-label="图元过滤器"><option>新建 线 (窗)</option></SelectField>
          <Chevron />
        </SelectBox>
        <EditType type="button">
          <Icon w={17} h={17} s="#aaa"><path d="M2 1h5v6H1V2zM9 7V2l1-1h6v5M1 10h6v6H1z" /><rect x="9.500" y="6.500" width="7" height="10" /><path d="M11 9h4M11 12h4" /></Icon>
          编辑类型
        </EditType>
      </TypeRow>
      <Grid>
        <colgroup><col /><col width="115" /><col width="12" /></colgroup>
        {groups.map(g => (
          <tbody key={g.title}>
            <tr><GroupCell colSpan={3} scope="rowgroup"><GroupButton type="button">{g.title}<Collapse /></GroupButton></GroupCell></tr>
            {g.rows.map(r => (
              <PropRow key={r.name} $muted={r.muted}><th scope="row">{r.name}</th><td>{r.value}</td><td /></PropRow>
            ))}
          </tbody>
        ))}
      </Grid>
    </PropertiesBox>
  </Properties>
);

/* ---------- drawing ---------- */
const GRIDS = [547.5, 802.5, 1056.5];
const DASH = '16.600 16.600';
const hatch = (from: number, to: number) => {
  const d: string[] = [];
  for (let x = from; x <= to; x += 90) d.push(`M${x - 100} 456l200 200M${x + 100} 456l-200 200`);
  return d.join('');
};
const Tick = ({ x, y }: { x: number; y: number }) => (
  <>
    <path d={`M${x} ${y - 24}v32`} />
    <path d={`M${x - 12} ${y + 12}l23-24`} />
  </>
);
const Plan = () => (
  <Drawing role="img" aria-label="窗族平面">
    <defs>
      <clipPath id="wallLeft"><rect x="200" y="493" width="347" height="126" /></clipPath>
      <clipPath id="wallRight"><rect x="1057" y="493" width="3000" height="126" /></clipPath>
    </defs>
    <g transform="translate(-252 -168)" fill="none" shapeRendering="crispEdges">
      <g stroke="#7f7f7f">
        <path d={hatch(173, 533)} clipPath="url(#wallLeft)" />
        <path d={hatch(1071, 4000)} clipPath="url(#wallRight)" />
        <path d="M547 539.500h510M547 571.500h510M579 549.500h446M579 562.500h446M579.500 539v32M770.500 539v32M833.500 539v32M1024.500 539v32M802.500 539v32" />
      </g>
      <path d="M0 492.500h5000M0 619.500h5000M547.500 493v126M1056.500 493v126" stroke="#fff" />
      <g stroke="#008000" strokeDasharray={DASH}>
        <path d="M229.800 492.500H5000M229.800 619.500H5000M239.800 555.500H5000" />
        {GRIDS.map(x => <path key={x} d={`M${x} 161.600V3000`} />)}
      </g>
      <g stroke="#fff">
        <path d="M547 316.500h509M547 814.500h509" />
        {GRIDS.map(x => <Tick key={x} x={x} y={316} />)}
        <Tick x={547.5} y={813.5} />
        <Tick x={1056.5} y={813.5} />
      </g>
      <rect x="636" y="712" width="332" height="70" fill="#000" />
    </g>
    <g transform="translate(-252 -168)" fill="#fafafa" fontFamily='"Liberation Sans", "Noto Sans CJK SC", sans-serif' fontSize="69">
      <text x="625" y="275" fontSize="68">EQ</text>
      <text x="880" y="275" fontSize="68">EQ</text>
      <text x="638" y="773" fontSize="66" fontWeight="300">宽度</text>
      <text x="794" y="773">= 800</text>
    </g>
    <path d="M677.500 80v17M673.500 92.500l4 4 3-3M680.500 80v17M676.500 84.500l4-4 4 4" stroke="#00f" fill="none" />
  </Drawing>
);

const View = () => (
  <Viewport>
    <Plan />
    <WindowControls>
      <button type="button" aria-label="最小化"><Icon w={13} h={12} s="#eee" sw={3}><path d="M1 8.500h11" /></Icon></button>
      <button type="button" aria-label="还原"><Icon w={11} h={12} s="#ddd" sw={1.6}><path d="M3 3V1h7v8H9M1 4h7v7H1z" /><path d="M4 7.500h1" /></Icon></button>
      <button type="button" aria-label="关闭"><Icon w={11} h={12} s="#eee" sw={2.5}><path d="M1 2l9 8M10 2l-9 8" /></Icon></button>
    </WindowControls>
    <NavBar>
      <NavMini type="button" aria-label="关闭导航栏"><Icon w={8} h={8} s="#bbb"><circle cx="4" cy="4" r="4" fill="#333" stroke="none" /><path d="M2.500 2.500l3 3M5.500 2.500l-3 3" /></Icon></NavMini>
      <NavTools>
        <button type="button" aria-label="二维导航控制盘">
          <Icon w={24} h={24} s="#777"><path d="M1 10a9 9 0 0 1 9-9h8v9a9 9 0 0 1-17 0z" fill="#b4b4b4" /><circle cx="10" cy="10" r="5.500" fill="#aaa" stroke="#4a4a4a" /><circle cx="10" cy="10" r="3" stroke="#555" /><path d="M13 16h3l-3 4h3M18 16v4h3v-4z" stroke="#2f5688" /></Icon>
        </button>
        <Icon w={26} h={3} s="#5c4a4a"><path d="M0 1.500h26" /></Icon>
        <button type="button" aria-label="区域放大"><Icon w={16} h={17} s="#456b3c"><rect x="1.500" y="1.500" width="9" height="9" fill="#6f9a5c" /><circle cx="10" cy="11" r="3" fill="#c8c8c8" stroke="#888" /><path d="M12 13l3 3" stroke="#999" /></Icon></button>
      </NavTools>
      <NavMini type="button" aria-label="自定义导航栏"><Icon w={8} h={8} s="#ddd"><circle cx="4" cy="4" r="4" fill="#333" stroke="none" /><path d="M2 2.500h4M2.500 4.500h3" /></Icon></NavMini>
    </NavBar>
  </Viewport>
);

const tabs = ['创建', '插入', '注释', '视图', '附加模块', '修改 | 放置 符号线', '管理'];

export default function App() {
  return (
    <Shell>
      <GlobalStyle />
      <TabBar>
        <AppButton type="button" aria-label="应用程序菜单"><Logo /></AppButton>
        {tabs.map((t, i) => <Tab key={t} type="button" $active={i === 5}>{t}</Tab>)}
        <TabToggle type="button" aria-label="最小化功能区">
          <Icon w={14} h={9}><rect x=".5" y=".5" width="13" height="8" rx="2" fill="#eee" /><path d="M4 6h6L7 3z" fill={INK} stroke="none" /></Icon>
          <Caret c="#111" />
        </TabToggle>
      </TabBar>
      <RibbonArea />
      <QuickAccess />
      <Options />
      <Workspace>
        <PropertiesPanel />
        <View />
      </Workspace>
      <Pointer width="14" height="21" viewBox="0 0 14 21" fill="#fff" stroke="#222"><path d={ARROW} /></Pointer>
    </Shell>
  );
}
